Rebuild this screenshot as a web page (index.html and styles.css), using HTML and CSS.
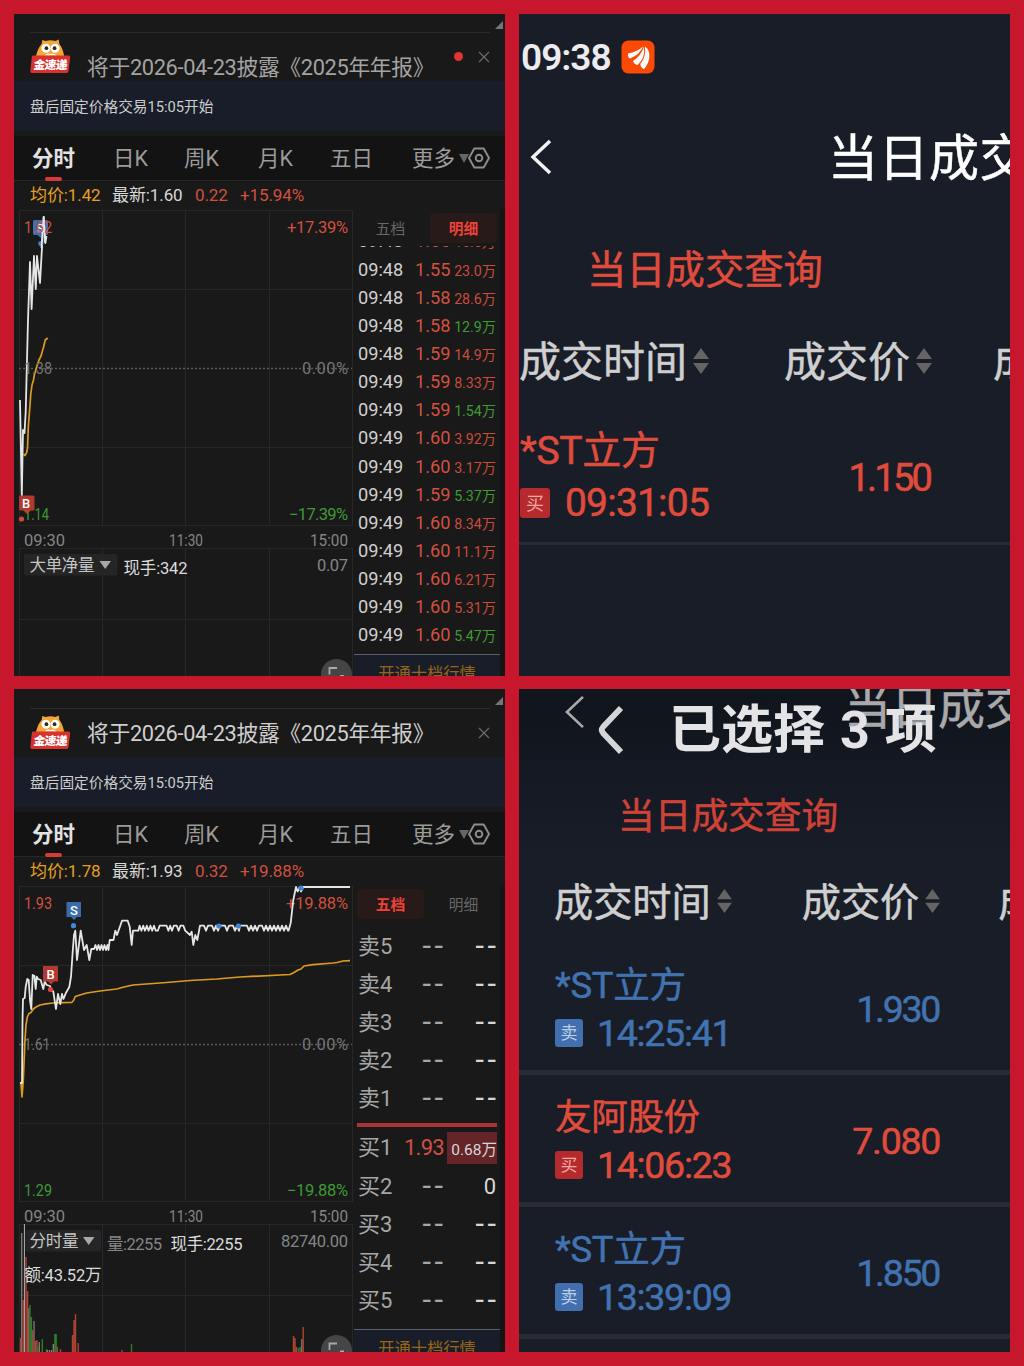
FILE: index.html
```html
<!DOCTYPE html>
<html lang="zh-CN">

<head>
    <meta charset="UTF-8">
    <meta name="viewport" content="width=device-width, initial-scale=1.0">
    <title>当日成交</title>
    <link rel="stylesheet" href="styles.css">
</head>

<body>
    <!-- 公用图标 -->
    <svg class="defs" width="0" height="0">
        <symbol id="owl" viewBox="0 0 42 37">
            <path d="M12.500 2 L16 3 Q21 1.500 26 3 L29.500 1.500 L30 6 Q34.500 12 35 20 H6 Q7 12 12 6 Z" fill="#f3a536" />
            <circle cx="16.300" cy="10.500" r="4.600" fill="#fff" />
            <circle cx="25.700" cy="10.500" r="4.600" fill="#fff" />
            <circle cx="16.800" cy="10.500" r="1.900" fill="#3a2415" />
            <circle cx="25.200" cy="10.500" r="1.900" fill="#3a2415" />
            <path d="M15 18 Q17 15 21 16.500 Q25 15 27 18 Z" fill="#fff4df" />
            <path d="M3.500 18 L39.500 18 Q41.500 18 41.200 20 L39.500 34 Q39.300 36 37.500 36 L2 36 Q0 36 0.300 34 L1.800 19.500 Q2 18 3.500 18 Z" fill="#d8322f" />
            <text x="4" y="31.500" class="owl-text" textLength="35" transform="skewX(-6) translate(2.500 0)">金速递</text>
        </symbol>
        <symbol id="gear" viewBox="0 0 22 22">
            <path d="M6.300 1.500 H15.700 L21 11 L15.700 20.500 H6.300 L1 11 Z" fill="none" stroke="#8e8e8e" stroke-width="1.900" stroke-linejoin="round" />
            <circle cx="11" cy="11" r="3.300" fill="none" stroke="#8e8e8e" stroke-width="1.900" />
        </symbol>
        <symbol id="close" viewBox="0 0 12 12">
            <path d="M1 1 L11 11 M11 1 L1 11" stroke="#6b6b6b" stroke-width="1.200" />
        </symbol>
        <symbol id="sort" viewBox="0 0 16 26">
            <path d="M8 0 L16 11 H0 Z M0 15 H16 L8 26 Z" fill="#646464" />
        </symbol>
    </svg>

    <main class="board">
        <!-- 分时 1 -->
        <section class="panel quote">
            <div class="notice unread">
                <i class="corner"></i>
                <svg class="owl"><use href="#owl" /></svg>
                <p>将于2026-04-23披露《2025年年报》</p>
                <i class="dot"></i>
                <svg class="close"><use href="#close" /></svg>
            </div>
            <div class="strip">盘后固定价格交易15:05开始</div>
            <nav class="tabs">
                <span class="active">分时</span><span>日K</span><span>周K</span><span>月K</span><span>五日</span><span>更多</span>
                <i class="caret"></i>
                <svg class="gear"><use href="#gear" /></svg>
            </nav>
            <div class="prices">
                <span class="avg">均价:1.42</span><span>最新:1.60</span><span class="up">0.22</span><span class="up">+15.94%</span>
            </div>
            <div class="body">
                <svg class="chart" viewBox="18 209 336 467">
                    <path class="grid" d="M19.500 210.500 H353 M19.500 289.500 H353 M19.500 447.500 H353 M19.500 525.500 H353 M19.500 548.500 H353 M19.500 619.500 H353 M19.500 210 V525 M102.500 210 V525 M185.500 210 V525 M269.500 210 V525 M352.500 210 V525 M19.500 548 V676 M102.500 548 V676 M185.500 548 V676 M269.500 548 V676 M352.500 548 V676" />
                    <path class="zero" d="M19 368.500 H352" />
                    <path class="line-avg" d="M23.700 454 L25 455.500 L26.500 453 L27.500 448 L28.300 427 L30 405 L30.700 395 L32 385 L33.500 380 L34.300 375 L37.300 365 L39 360 L41 356 L43.300 348 L45.300 340 L47.700 338" />
                    <path class="line" d="M20 400 L21.800 496 L23 430 L24.500 433 L25.700 412 L26.500 380 L28 320 L30 262 L31.600 309 L34 256 L35.800 289 L37 256 L40 283 L43.700 217 L45.300 243 L46.500 236" />
                    <rect x="33" y="220" width="15" height="15" rx="1.500" fill="#3e6fb0" />
                    <path d="M37.500 235 H44 L41 238 Z" fill="#3e6fb0" />
                    <circle cx="40.700" cy="243.500" r="2.500" fill="#3f7fd0" />
                    <text class="mark" x="36.500" y="232.500">S</text>
                    <path class="line" d="M41.500 248 L43.700 217 L45.300 243" />
                    <text class="t up" x="24" y="233" textLength="28" lengthAdjust="spacingAndGlyphs">1.62</text>
                    <text class="t up" x="287" y="233" textLength="61">+17.39%</text>
                    <text class="t gray" x="24" y="374" textLength="28" lengthAdjust="spacingAndGlyphs">1.38</text>
                    <text class="t gray" x="302" y="374" textLength="46">0.00%</text>
                    <text class="t down" x="24" y="519.500" textLength="25" lengthAdjust="spacingAndGlyphs">1.14</text>
                    <text class="t down" x="289" y="519.500" textLength="59">−17.39%</text>
                    <path d="M23 510 H31 L27 514 Z" fill="#a05a20" />
                    <rect x="19" y="495.500" width="15.500" height="15" rx="1.500" fill="#b0392f" />
                    <text class="mark" x="22" y="508">B</text>
                    <circle cx="21.500" cy="519" r="2.600" fill="#d2483a" />
                    <text class="t time" x="24" y="546" textLength="41">09:30</text>
                    <text class="t time" x="169" y="546" textLength="34" lengthAdjust="spacingAndGlyphs">11:30</text>
                    <text class="t time" x="310" y="546" textLength="38" lengthAdjust="spacingAndGlyphs">15:00</text>
                    <rect x="24" y="554" width="93.500" height="21.500" rx="2" fill="#252525" />
                    <text class="t label" x="29.500" y="570.500" textLength="65">大单净量</text>
                    <path d="M99.500 561 H111 L105.200 569 Z" fill="#a8a8a8" />
                    <text class="t white" x="123.500" y="573.500" textLength="64">现手:342</text>
                    <text class="t time" x="317" y="571" textLength="31">0.07</text>
                    <circle cx="336.500" cy="674.500" r="15.500" fill="#454545" />
                    <path class="expand" d="M329.500 674.500 V668 H337 M344 676 H340" />
                </svg>
                <aside class="side">
                    <div class="side-tabs"><span>五档</span><span class="active">明细</span></div>
                    <div class="ticks">
                        <div class="tick"><span>09:48</span><b>1.56</b><em>16.6万</em></div>
                        <div class="tick"><span>09:48</span><b>1.55</b><em>23.0万</em></div>
                        <div class="tick"><span>09:48</span><b>1.58</b><em>28.6万</em></div>
                        <div class="tick"><span>09:48</span><b>1.58</b><em class="down">12.9万</em></div>
                        <div class="tick"><span>09:48</span><b>1.59</b><em>14.9万</em></div>
                        <div class="tick"><span>09:49</span><b>1.59</b><em>8.33万</em></div>
                        <div class="tick"><span>09:49</span><b>1.59</b><em class="down">1.54万</em></div>
                        <div class="tick"><span>09:49</span><b>1.60</b><em>3.92万</em></div>
                        <div class="tick"><span>09:49</span><b>1.60</b><em>3.17万</em></div>
                        <div class="tick"><span>09:49</span><b>1.59</b><em class="down">5.37万</em></div>
                        <div class="tick"><span>09:49</span><b>1.60</b><em>8.34万</em></div>
                        <div class="tick"><span>09:49</span><b>1.60</b><em>11.1万</em></div>
                        <div class="tick"><span>09:49</span><b>1.60</b><em>6.21万</em></div>
                        <div class="tick"><span>09:49</span><b>1.60</b><em>5.31万</em></div>
                        <div class="tick"><span>09:49</span><b>1.60</b><em class="down">5.47万</em></div>
                    </div>
                    <div class="promo">开通十档行情</div>
                </aside>
            </div>
        </section>

        <!-- 当日成交 1 -->
        <section class="panel deals">
            <div class="status">
                <span>09:38</span>
                <svg class="app" viewBox="0 0 34 34">
                    <rect x="0.500" y="0.500" width="33" height="33" rx="7" fill="#fb4a06" />
                    <path d="M7 13.500 Q16 12 22 6.500 Q18.500 15 9 18.500 Q6.500 17 7 13.500 Z" fill="#fff" />
                    <path d="M12 21 Q20 16 22.800 7 Q25 17 16.500 25 Q13 24.500 12 21 Z" fill="#fff" />
                    <path d="M23.800 6.500 Q29 9.500 28.300 18 Q27 25 23 29 Q19.500 27.500 19.300 24 Q25.500 17 23.800 6.500 Z" fill="#fff" />
                </svg>
            </div>
            <div class="title">
                <svg class="back" viewBox="0 0 22 36"><path d="M20 2 L3 18 L20 34" /></svg>
                <h1>当日成交</h1>
            </div>
            <h2>当日成交查询</h2>
            <div class="cols">
                <span>成交时间</span><svg class="sort"><use href="#sort" /></svg>
                <span class="c2">成交价</span><svg class="sort"><use href="#sort" /></svg>
                <span class="c3">成交量</span>
            </div>
            <div class="deal buy">
                <div>
                    <p class="name">*ST立方</p>
                    <p class="when"><i>买</i>09:31:05</p>
                </div>
                <strong class="narrow">1.150</strong>
            </div>
        </section>

        <!-- 分时 2 -->
        <section class="panel quote lower">
            <div class="notice">
                <i class="corner"></i>
                <svg class="owl"><use href="#owl" /></svg>
                <p>将于2026-04-23披露《2025年年报》</p>
                <svg class="close"><use href="#close" /></svg>
            </div>
            <div class="strip">盘后固定价格交易15:05开始</div>
            <nav class="tabs">
                <span class="active">分时</span><span>日K</span><span>周K</span><span>月K</span><span>五日</span><span>更多</span>
                <i class="caret"></i>
                <svg class="gear"><use href="#gear" /></svg>
            </nav>
            <div class="prices">
                <span class="avg">均价:1.78</span><span>最新:1.93</span><span class="up">0.32</span><span class="up">+19.88%</span>
            </div>
            <div class="body">
                <svg class="chart" viewBox="18 885 336 467">
                    <path class="grid" d="M19.500 886.500 H353 M19.500 965.500 H353 M19.500 1123.500 H353 M19.500 1201.500 H353 M19.500 1224.500 H353 M19.500 1295.500 H353 M19.500 886 V1201 M102.500 886 V1201 M185.500 886 V1201 M269.500 886 V1201 M352.500 886 V1201 M19.500 1224 V1352 M102.500 1224 V1352 M185.500 1224 V1352 M269.500 1224 V1352 M352.500 1224 V1352" />
                    <path class="zero" d="M19 1044.500 H352" />
                    <text class="t up" x="24" y="909" textLength="28" lengthAdjust="spacingAndGlyphs">1.93</text>
                    <text class="t up" x="286" y="909" textLength="62">+19.88%</text>
                    <text class="t gray" x="24" y="1050" textLength="26" lengthAdjust="spacingAndGlyphs">1.61</text>
                    <text class="t gray" x="302" y="1050" textLength="46">0.00%</text>
                    <text class="t down" x="24" y="1195.500" textLength="28" lengthAdjust="spacingAndGlyphs">1.29</text>
                    <text class="t down" x="287" y="1195.500" textLength="61">−19.88%</text>
                    <path class="line-avg" d="M21 1083 L22 1097 L23.300 1080 L25 1040 L26 1025 L27.300 1017 L29 1013.500 L31 1012.500 L33.300 1009 L36 1007 L40 1005 L46 1003.800 L53 1003 L62 1002.700 L71.700 1002.500 L73.500 1000.500 L75.300 996.500 L80 995 L86.700 993 L100 991 L116.700 989 L124 987 L133 985 L166.700 982.500 L190 980.500 L216.700 979 L240 977 L290 974.500 L294 972.500 L298 970 L301 969 L304 966 L313 964.600 L333 963 L337 962.500 L343 961 L350 960.700" />
                    <path class="line" d="M20 1083 H22 L22.500 1020 L23 999 L24.700 998 L25.700 987 L27.300 979 L28.700 980 L30 1000 L31.300 1009 L32.700 975 L34.300 975.700 L35.700 989 L36.700 976.700 L38 979 L40.700 980 L43.300 989 L44.700 981.700 L46.700 985 L50 986 L51 989 L53.300 991.700 L56 1009 L58 994 L60.300 1004 L62 994 L63.500 999 L66 992.700 L69.300 987 L71 976.700 L72.700 951.700 L74 935 L75.300 930.700 L77 960 L80.700 930.700 L84 950 L86.700 945 L89.300 960 L91.300 949 L94 949 L95.500 945 L97 950 L98.500 945 L100 950 L101.500 945 L103 950 L104.500 945 L106 950 L107.500 945 L108.500 950 L109.700 940 H113.500 L115.300 930.700 L117 935 L122 920.700 H127.700 L129.700 926.700 L131.700 945 L133 930.700 H138.300 l1.300 -5 l1.800 5 l1.800 -5 l1.800 5 l1.800 -5 l1.800 5 l1.800 -5 l1.800 5 l1.800 -5 l1.800 5 h2 l1.800 -5 h7 l1.800 5 l1.800 -5 l1.800 5 l1.800 -5 h3 l1.800 5 l1.800 -5 h3 l1.800 5 L190 935 L191.700 931.700 L193.300 945 L195.300 935 L197.300 940 L200 925.700 h4 l2 5 l2 -5 h4 l2 5 l2 -5 l2 5 l2 -5 h5 l2 5 l2 -5 h4 l2 5 l2 -5 l2 5 l1 -5 h7 l2 5 l2 -5 l2 5 l2 -5 l2 5 l2 -5 h3 l2 5 l2 -5 l2 5 l2 -5 l2 5 l2 -5 l2 5 l2 -5 l2 5 l2 -5 l2 5 l2 -5 l2 5 L288.500 930.700 L290.700 923 L293.300 900 L296 887 L297.700 891.500 L299.300 887.500 L301 891.500 L303.300 887 H350" />
                    <circle class="point" cx="73.500" cy="925.700" r="2.600" />
                    <circle class="point" cx="219" cy="926" r="2.600" />
                    <circle class="point" cx="238.500" cy="926" r="2.600" />
                    <circle class="point" cx="301" cy="888" r="2.600" />
                    <path d="M66.500 902 H81 V917 H77 L74 920 L71 917 H66.500 Z" fill="#3a6cac" />
                    <text class="mark" x="70" y="914.500">S</text>
                    <path d="M43 966 H58 V981.500 H54 L51 984.500 L48 981.500 H43 Z" fill="#b33a31" />
                    <text class="mark" x="46.500" y="978.500">B</text>
                    <circle cx="50.500" cy="989.500" r="2.600" fill="#e0463a" />
                    <text class="t time" x="24" y="1222" textLength="41">09:30</text>
                    <text class="t time" x="169" y="1222" textLength="34" lengthAdjust="spacingAndGlyphs">11:30</text>
                    <text class="t time" x="310" y="1222" textLength="38" lengthAdjust="spacingAndGlyphs">15:00</text>
                    <!-- 成交量柱 -->
                    <path class="vol-gray" d="M21.700 1352 V1233 M28.800 1352 V1308 M34 1352 V1321 M39.300 1352 V1342 M47.500 1352 V1350 M49.500 1352 V1350 M51.500 1352 V1350 M53.300 1352 V1344 M301.800 1352 V1339" />
                    <path class="vol-red" d="M20.500 1352 V1338 M23.200 1352 V1300 M26 1352 V1257 M27.600 1352 V1291 M32.700 1352 V1330 M35.500 1352 V1341 M37 1352 V1340 M57.300 1352 V1347 M60.500 1352 V1349 M72.500 1352 V1335 M74 1352 V1320 M75.500 1352 V1314 M78.200 1352 V1343 M122 1352 V1350 M293.500 1352 V1336 M295 1352 V1338 M296.500 1352 V1347 M303.200 1352 V1327" />
                    <path class="vol-green" d="M30 1352 V1305 M31.400 1352 V1317 M38 1352 V1346 M42.300 1352 V1339 M46.500 1352 V1349 M54.800 1352 V1334 M56.200 1352 V1334 M131.500 1352 V1344 M298.500 1352 V1348 M300.200 1352 V1347" />
                    <rect x="25" y="1230" width="76" height="21.500" rx="2" fill="#252525" />
                    <path d="M24.400 1352 V1224" stroke="#b5b5b5" stroke-width="1" />
                    <text class="t label" x="29.500" y="1246.500" textLength="49">分时量</text>
                    <path d="M83 1237 H94.500 L88.700 1245 Z" fill="#a8a8a8" />
                    <text class="t time" x="107" y="1249.500" textLength="55">量:2255</text>
                    <text class="t white" x="170.500" y="1249.500" textLength="72">现手:2255</text>
                    <text class="t time" x="281" y="1247" textLength="67">82740.00</text>
                    <text class="t white" x="24.500" y="1280.500" textLength="77">额:43.52万</text>
                    <circle cx="336.500" cy="1350.500" r="15.500" fill="#454545" />
                    <path class="expand" d="M329.500 1350 V1343.500 H337 M344 1351.500 H340" />
                </svg>
                <aside class="side">
                    <div class="side-tabs"><span class="active">五档</span><span>明细</span></div>
                    <div class="depth">
                        <div class="level"><span>卖5</span><b class="none">--</b><em class="none">--</em></div>
                        <div class="level"><span>卖4</span><b class="none">--</b><em class="none">--</em></div>
                        <div class="level"><span>卖3</span><b class="none">--</b><em class="none">--</em></div>
                        <div class="level"><span>卖2</span><b class="none">--</b><em class="none">--</em></div>
                        <div class="level"><span>卖1</span><b class="none">--</b><em class="none">--</em></div>
                        <div class="split"></div>
                        <div class="level"><span>买1</span><b class="up">1.93</b><em class="flash">0.68万</em></div>
                        <div class="level"><span>买2</span><b class="none">--</b><em>0</em></div>
                        <div class="level"><span>买3</span><b class="none">--</b><em class="none">--</em></div>
                        <div class="level"><span>买4</span><b class="none">--</b><em class="none">--</em></div>
                        <div class="level"><span>买5</span><b class="none">--</b><em class="none">--</em></div>
                    </div>
                    <div class="promo">开通十档行情</div>
                </aside>
            </div>
        </section>

        <!-- 当日成交 2 -->
        <section class="panel deals selecting">
            <div class="ghost">
                <svg class="back" viewBox="0 0 22 36"><path d="M20 2 L3 18 L20 34" /></svg>
                <span>当日成交</span>
            </div>
            <div class="title">
                <svg class="back" viewBox="0 0 28 50"><path d="M24 3 L6 22 Q3.500 25 6 28 L24 47" /></svg>
                <h1>已选择 3 项</h1>
            </div>
            <h2>当日成交查询</h2>
            <div class="cols">
                <span>成交时间</span><svg class="sort"><use href="#sort" /></svg>
                <span class="c2">成交价</span><svg class="sort"><use href="#sort" /></svg>
                <span class="c3">成交量</span>
            </div>
            <div class="deal sell">
                <div>
                    <p class="name">*ST立方</p>
                    <p class="when"><i>卖</i>14:25:41</p>
                </div>
                <strong class="narrow">1.930</strong>
            </div>
            <div class="deal buy">
                <div>
                    <p class="name">友阿股份</p>
                    <p class="when"><i>买</i>14:06:23</p>
                </div>
                <strong>7.080</strong>
            </div>
            <div class="deal sell">
                <div>
                    <p class="name">*ST立方</p>
                    <p class="when"><i>卖</i>13:39:09</p>
                </div>
                <strong class="narrow">1.850</strong>
            </div>
        </section>
    </main>
</body>

</html>
```
FILE: styles.css
```css
/* Reset */
* {
    margin: 0;
    padding: 0;
    box-sizing: border-box;
    font-family: Roboto, "Noto Sans CJK SC", sans-serif;
}

body {
    background-color: #c6172d;
    color: #d8d8d8;
    overflow: hidden;
}

i, em {
    font-style: normal;
}

b {
    font-weight: 400;
}

.defs {
    position: absolute;
}

.board {
    width: 1024px;
    height: 1366px;
    padding: 14px;
    display: grid;
    grid-template-columns: 491px 491px;
    grid-template-rows: 662px 663px;
    column-gap: 14px;
    row-gap: 13px;
}

.panel {
    overflow: hidden;
    white-space: nowrap;
    background-color: #191919;
}

.lower {
    padding-top: 1px;
}

.up {
    color: #d2503f;
    fill: #d2503f;
}

.down {
    color: #3f9a35;
    fill: #3f9a35;
}

/* 公告 */
.notice {
    position: relative;
    height: 67px;
    margin: 0 15px 0 16px;
    padding-top: 19px;
    display: flex;
}

.notice::before {
    content: "";
    position: absolute;
    left: 0;
    right: 0;
    top: 18px;
    height: 1px;
    background-color: #2a2a2a;
}

.corner {
    position: absolute;
    top: 7px;
    right: -13px;
    border-left: 8px solid transparent;
    border-bottom: 8px solid #757575;
}

.owl {
    width: 41px;
    height: 36px;
    margin-top: 5px;
}

.owl-text {
    font-size: 12px;
    font-weight: 900;
    fill: #fff;
}

.notice p {
    margin-left: 16px;
    font-size: 21.8px;
    line-height: 50px;
    letter-spacing: -0.35px;
    color: #cfcfcf;
}

.unread p {
    line-height: 70px;
    color: #a3a3a3;
}

.dot {
    position: absolute;
    left: 424px;
    top: 38px;
    width: 9px;
    height: 9px;
    border-radius: 50%;
    background-color: #df3631;
}

.close {
    position: absolute;
    right: 0;
    top: 37px;
    width: 12px;
    height: 12px;
}

.strip {
    height: 50px;
    padding-left: 16px;
    background-color: #181d29;
    font-size: 14.7px;
    line-height: 53px;
    color: #cdcdcd;
}

/* 周期选项 */
.tabs {
    position: relative;
    height: 50px;
    padding-left: 18px;
    border-top: 5px solid #191919;
    border-bottom: 1px solid #282828;
    background-color: #131313;
    display: grid;
    grid-template-columns: 81px 71px 74px 72px 82px auto;
    font-size: 21.5px;
    line-height: 46px;
    color: #9b9b9b;
}

.tabs .active {
    position: relative;
    color: #e2e2e2;
    font-weight: 700;
}

.tabs .active::after {
    content: "";
    position: absolute;
    left: 13px;
    bottom: 1px;
    width: 17px;
    height: 4px;
    border-radius: 2px;
    background-color: #d93a36;
}

.caret {
    position: absolute;
    left: 445px;
    top: 18px;
    border: 5px solid transparent;
    border-top: 9px solid #666;
    border-bottom: 0;
}

.gear {
    position: absolute;
    left: 454px;
    top: 11px;
    width: 22px;
    height: 22px;
}

.prices {
    height: 28px;
    margin-left: 5px;
    padding-left: 11px;
    display: grid;
    grid-template-columns: 82px 83px 45px auto;
    font-size: 17px;
    line-height: 28px;
    letter-spacing: -0.1px;
}

.avg {
    color: #e5a021;
}

/* 走势图 */
.body {
    display: flex;
    padding-left: 4px;
    border-right: 5px solid #141414;
    height: 467px;
}

.chart {
    width: 336px;
    height: 467px;
    flex: none;
}

.grid {
    stroke: #272727;
    fill: none;
}

.zero {
    stroke: #5c5c5c;
    stroke-width: 1.5;
    stroke-dasharray: 2 2;
}

.line {
    fill: none;
    stroke: #e6e6e6;
    stroke-width: 1.8;
    stroke-linejoin: round;
}

.line-avg {
    fill: none;
    stroke: #dc9b20;
    stroke-width: 1.7;
    stroke-linejoin: round;
}

.t {
    font-size: 16.5px;
}

.gray {
    fill: #747474;
}

.time {
    fill: #858585;
}

.label {
    fill: #c4c4c4;
}

.white {
    fill: #dcdcdc;
}

.mark {
    font-size: 13px;
    font-weight: 500;
    fill: #fff;
}

.point {
    fill: #3f86d8;
}

.expand {
    fill: none;
    stroke: #a9a9a9;
    stroke-width: 1.8;
}

.vol-gray {
    stroke: #858585;
    stroke-width: 1.2;
}

.vol-red {
    stroke: #b04434;
    stroke-width: 1.4;
}

.vol-green {
    stroke: #2f7a2a;
    stroke-width: 1.4;
}

/* 盘口 */
.side {
    width: 146px;
    height: 467px;
    display: flex;
    flex-direction: column;
    overflow: hidden;
}

.side-tabs {
    height: 37px;
    flex: none;
    padding: 4px 3px 3px 3px;
    display: flex;
    gap: 6px;
    font-size: 14.7px;
    line-height: 32px;
    text-align: center;
    color: #686868;
}

.side-tabs span {
    width: 67px;
    border-radius: 4px;
}

.side-tabs .active {
    background-color: #271a19;
    color: #ee4238;
    font-weight: 700;
}

.ticks {
    height: 409px;
    flex: none;
    display: flex;
    flex-direction: column;
    justify-content: flex-end;
    overflow: hidden;
    padding-bottom: 5.500px;
}

.tick {
    height: 28.150px;
    flex: none;
    padding: 0 4px;
    display: flex;
    font-size: 18.200px;
    line-height: 28.500px;
    color: #d0d0d0;
}

.tick span {
    width: 57px;
}

.tick b {
    color: #d2503f;
}

.tick em {
    margin-left: auto;
    font-size: 14.200px;
    line-height: 30px;
    color: #c94b3b;
}

.tick .down {
    color: #3f9a35;
}

.depth {
    height: 408px;
    flex: none;
    padding: 6px 3px 0 4px;
}

.level {
    height: 38.100px;
    display: grid;
    grid-template-columns: 35px 51px 53px;
    font-size: 22px;
    line-height: 38px;
    color: #a6a6a6;
}

.level b,
.level em {
    text-align: right;
}

.level b.up {
    letter-spacing: -0.7px;
    color: #d2503f;
}

.level em {
    color: #d6d6d6;
    padding-right: 1px;
}

/* 无挂单时的短横 */
.level .none {
    padding-right: 2px;
    font-family: "DejaVu Sans Mono", monospace;
    font-size: 29px;
    letter-spacing: -5.500px;
    line-height: 35px;
}

.level .flash {
    align-self: center;
    height: 32px;
    margin: -1px 0 0 3px;
    background-color: #652528;
    font-size: 15.5px;
    line-height: 36px;
    padding: 0;
}

.split {
    height: 4px;
    margin: 5px 0 2px -1px;
    background-color: #a83436;
}

.promo {
    flex: 1;
    padding-top: 1px;
    margin-top: -1px;
    border-top: 1px solid #5a5e68;
    background-color: #181d29;
    font-size: 16.300px;
    line-height: 35px;
    text-align: center;
    color: #976516;
}

/* 成交列表 */
.deals {
    position: relative;
    background-color: #181d28;
    -webkit-text-stroke: 0.5px;
}

.status {
    height: 86px;
    padding-left: 2px;
    display: flex;
    align-items: center;
    gap: 10px;
    font-size: 37px;
    font-weight: 600;
    letter-spacing: -1px;
    color: #ececf0;
    -webkit-text-stroke: 0;
}

.app {
    width: 34px;
    height: 34px;
}

.title {
    height: 114px;
    display: flex;
    align-items: center;
    padding-left: 11px;
}

.back {
    width: 22px;
    height: 36px;
    flex: none;
    fill: none;
    stroke: #f2f2f2;
    stroke-width: 3.5;
}

h1 {
    margin-left: 276px;
    padding-top: 4px;
    font-size: 50px;
    font-weight: 400;
    line-height: 60px;
    letter-spacing: 0.5px;
    color: #fff;
}

h2 {
    height: 110px;
    padding-left: 68px;
    font-size: 39.300px;
    font-weight: 400;
    line-height: 114px;
    color: #e04c3c;
}

.cols {
    height: 74px;
    display: flex;
    align-items: center;
    font-size: 42px;
    line-height: 74px;
    color: #cfcfcf;
}

.cols span {
    padding-top: 4px;
}

.sort {
    width: 16px;
    height: 26px;
    margin-left: 6px;
    flex: none;
}

.c2 {
    margin-left: 75px;
}

.c3 {
    margin-left: 61px;
}

.deal {
    height: 147px;
    padding: 28px 79px 0 1px;
    display: flex;
    justify-content: space-between;
    border-bottom: 3px solid #292c32;
    font-size: 39px;
    letter-spacing: -0.800px;
}

.name {
    height: 51px;
    font-size: 39px;
    line-height: 51px;
    letter-spacing: -0.3px;
}

.when {
    display: flex;
    align-items: center;
    height: 51px;
}

.when i {
    width: 30px;
    height: 30px;
    margin-right: 15px;
    border-radius: 3px;
    font-size: 18px;
    line-height: 31px;
    text-align: center;
    letter-spacing: 0;
    -webkit-text-stroke: 0;
}

.deal strong {
    font-weight: 400;
    line-height: 104px;
    letter-spacing: -1.300px;
}

.deal .narrow {
    padding-right: 1px;
    font-size: 38px;
    letter-spacing: -2.800px;
}

.buy {
    color: #e04c3c;
}

.buy i {
    background-color: #b52a2c;
    color: #f0a8a4;
}

.sell {
    color: #4273b0;
}

.sell i {
    background-color: #426fad;
    color: #bcd0ec;
}

/* 选择状态 */
.selecting {
    background-image: linear-gradient(#10141c 0, #181d28 170px);
}

.ghost {
    position: absolute;
    left: 45px;
    top: 0;
    display: flex;
    align-items: center;
    height: 46px;
    font-size: 47px;
    line-height: 42px;
    color: #a9a9ab;
}

.ghost .back {
    width: 21px;
    height: 34px;
    margin-top: -1px;
    stroke: #a9a9ab;
    stroke-width: 2.8;
}

.ghost span {
    margin: -8px 0 0 259px;
}

.selecting .title {
    position: relative;
    height: 82px;
    padding-left: 78px;
}

.selecting .title .back {
    width: 28px;
    height: 50px;
    stroke: #d4d5d8;
    stroke-width: 5.8;
}

.selecting h1 {
    margin-left: 44px;
    padding-top: 1px;
    font-size: 52px;
    font-weight: 700;
    letter-spacing: 0;
    word-spacing: 2px;
    color: #e4e4e6;
    -webkit-text-stroke: 0;
}

.selecting h2 {
    height: 89px;
    padding-left: 99px;
    font-size: 36.700px;
    line-height: 92px;
    color: #cf4237;
}

.selecting .cols {
    height: 80px;
    padding-left: 35px;
    font-size: 39.200px;
    line-height: 80px;
}

.selecting .cols span {
    padding-top: 5px;
}

.selecting .sort {
    width: 15px;
    height: 24px;
    margin-top: 1px;
}

.selecting .c2 {
    margin-left: 70px;
}

.selecting .c3 {
    margin-left: 58px;
}

.selecting .deal {
    height: 132px;
    padding: 18px 70px 0 36px;
    border-bottom-width: 5px;
    font-size: 37.500px;
    letter-spacing: -1.300px;
}

.selecting .name {
    height: 49px;
    font-size: 36.500px;
    line-height: 50px;
}

.selecting .when {
    height: 46px;
}

.selecting .when i {
    width: 28px;
    height: 28px;
    margin-right: 14px;
    font-size: 17px;
    line-height: 29px;
}

.selecting .deal strong {
    line-height: 97px;
}

.selecting .deal .narrow {
    font-size: 37.500px;
    letter-spacing: -2.300px;
}

.selecting .cols + .deal {
    height: 135px;
    padding-top: 21px;
}
```
